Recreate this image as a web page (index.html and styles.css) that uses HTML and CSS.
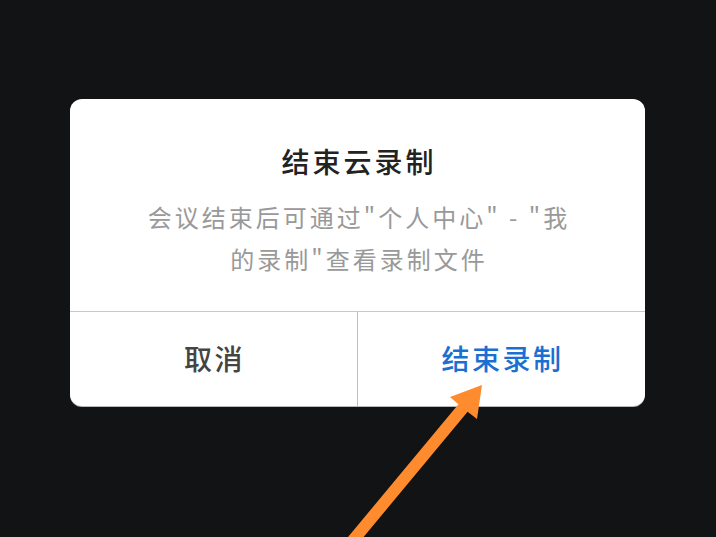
FILE: index.html
```html
<!DOCTYPE html>
<html lang="zh-CN">
<head>
<meta charset="utf-8">
<link rel="stylesheet" href="styles.css">
</head>
<body>
<div class="stage">
  <div class="dialog">
    <div class="content">
      <div class="title">结束云录制</div>
      <div class="msg">会议结束后可通过"个人中心" - "我<br>的录制"查看录制文件</div>
    </div>
    <div class="actions">
      <div class="btn cancel">取消</div>
      <div class="btn confirm">结束录制</div>
    </div>
  </div>
</div>
<svg class="arrow" width="716" height="537" viewBox="0 0 716 537">
  <polygon fill="#ff8b2f" points="482,385 450,397 458.4,404.2 335.4,552.2 344.6,559.8 467.6,411.8 477,419"/>
</svg>
</body>
</html>
```
FILE: styles.css
```css
html, body {
  margin: 0;
  padding: 0;
  background: #121315;
  width: 716px;
  height: 537px;
  overflow: hidden;
  font-family: "Noto Sans CJK SC", "Noto Sans", sans-serif;
}
.stage {
  padding: 99px 0 0 70px;
}
.dialog {
  width: 575px;
  height: 307px;
  background: #ffffff;
  border-radius: 12px;
  box-shadow: 0 1px 0 #b8b8b8;
  display: flex;
  flex-direction: column;
  overflow: hidden;
}
.content {
  height: 212px;
  box-sizing: border-box;
  padding-top: 43px;
  text-align: center;
}
.title {
  font-size: 28px;
  line-height: 38px;
  letter-spacing: 3px;
  color: #222222;
  font-weight: 500;
  margin-left: 3px;
}
.msg {
  margin-top: 16px;
  font-size: 24px;
  line-height: 42px;
  letter-spacing: 3px;
  color: #999999;
  margin-left: 3px;
}
.actions {
  flex: 1;
  display: flex;
  border-top: 1px solid #c8c8c8;
}
.btn {
  flex: 1;
  display: flex;
  align-items: center;
  justify-content: center;
  font-size: 28px;
  letter-spacing: 2.5px;
  font-weight: 500;
  padding-bottom: 2px;
  padding-left: 2px;
}
.cancel {
  color: #444444;
  border-right: 1px solid #c0c0c0;
}
.confirm {
  color: #1a6fd2;
}
.arrow {
  position: absolute;
  left: 0;
  top: 0;
}
```
